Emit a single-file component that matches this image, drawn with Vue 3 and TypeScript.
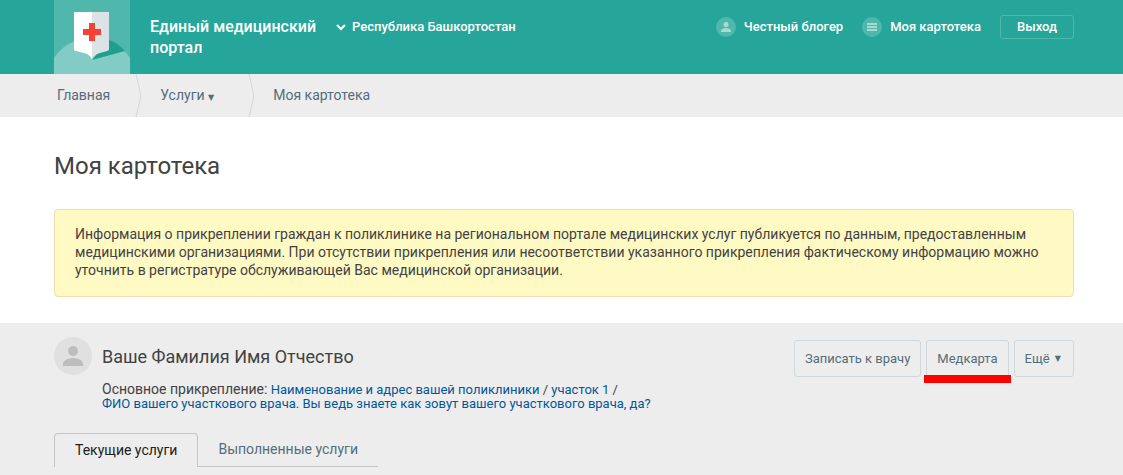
<script setup lang="ts">
import { ref } from 'vue'

const notice =
  'Информация о прикреплении граждан к поликлинике на региональном портале медицинских услуг публикуется по данным, предоставленным медицинскими организациями. При отсутствии прикрепления или несоответствии указанного прикрепления фактическому информацию можно уточнить в регистратуре обслуживающей Вас медицинской организации.'

const tabs: string[] = ['Текущие услуги', 'Выполненные услуги']
const activeTab = ref<number>(0)
</script>

<template>
  <div class="page">
    <header class="header">
      <a class="logo" href="#" aria-label="Единый медицинский портал">
        <svg width="76" height="74" viewBox="0 0 76 74">
          <rect width="76" height="74" fill="#50b7ad" />
          <path d="M0 58C8 45 22 38 38 38s30 7 38 20v16H0z" fill="#82ccc5" />
          <path d="M55 40c6 2 12 6 16 11L38 60z" fill="#1f9f90" />
          <path d="M20 12h18v48c-1-4-4-6-8-7l-8-2c-1 0-2-1-2-2z" fill="#fff" />
          <path d="M38 12h17v37c0 1-1 2-2 2l-7 2c-4 1-7 3-8 7z" fill="#dce3e7" />
          <path d="M35 23h6v6h6v6h-6v6h-6v-6h-6v-6h6z" fill="#f44336" />
        </svg>
      </a>
      <a class="brand" href="#">Единый медицинский<br />портал</a>
      <button class="region" type="button">
        <svg width="10" height="7" viewBox="0 0 10 7" aria-hidden="true">
          <path d="M1 1l4 4 4-4" fill="none" stroke="currentColor" stroke-width="2" />
        </svg>
        Республика Башкортостан
      </button>
      <nav class="user-nav">
        <a href="#">
          <svg width="20" height="20" viewBox="0 0 20 20" aria-hidden="true">
            <circle cx="10" cy="10" r="10" fill="#50b7ad" />
            <circle cx="10" cy="7.5" r="2.5" fill="#a6dad5" />
            <path d="M5 15v-1c0-2 3-3 5-3s5 1 5 3v1z" fill="#a6dad5" />
          </svg>
          Честный блогер
        </a>
        <a href="#">
          <svg width="20" height="20" viewBox="0 0 20 20" aria-hidden="true">
            <circle cx="10" cy="10" r="10" fill="#50b7ad" />
            <path d="M5 6h10v2H5zM5 9h10v2H5zM5 12h10v2H5z" fill="#a6dad5" />
          </svg>
          Моя картотека
        </a>
        <button class="logout" type="button">Выход</button>
      </nav>
    </header>

    <nav class="crumbs" aria-label="Навигация">
      <a href="#">Главная</a>
      <svg class="sep" width="8" height="43" viewBox="0 0 8 43" aria-hidden="true">
        <path d="M1 0l5 22-5 21" fill="none" stroke="#cfd8dc" />
      </svg>
      <a class="services" href="#">Услуги <span class="caret">▼</span></a>
      <svg class="sep" width="8" height="43" viewBox="0 0 8 43" aria-hidden="true">
        <path d="M1 0l5 22-5 21" fill="none" stroke="#cfd8dc" />
      </svg>
      <a href="#">Моя картотека</a>
    </nav>

    <main>
      <section class="intro">
        <h1>Моя картотека</h1>
        <p class="notice">{{ notice }}</p>
      </section>

      <section class="card">
        <div class="patient">
          <svg class="avatar" width="38" height="38" viewBox="0 0 38 38" aria-hidden="true">
            <circle cx="19" cy="19" r="19" fill="#e0e0e0" />
            <circle cx="19" cy="14" r="5" fill="#bdbdbd" />
            <path d="M9 29v-2c0-4 6-6 10-6s10 2 10 6v2z" fill="#bdbdbd" />
          </svg>
          <div class="details">
            <h2>Ваше Фамилия Имя Отчество</h2>
            <p>
              <span class="label">Основное прикрепление:</span> <a href="#">Наименование и адрес вашей поликлиники</a> / <a href="#">участок 1</a> /<br />
              <a href="#">ФИО вашего участкового врача. Вы ведь знаете как зовут вашего участкового врача, да?</a>
            </p>
          </div>
          <div class="actions">
            <button type="button">Записать к врачу</button>
            <button class="marked" type="button">Медкарта</button>
            <button class="more" type="button">Ещё <span class="caret">▼</span></button>
          </div>
        </div>
        <div class="tabs" role="tablist">
          <button
            v-for="(tab, i) in tabs"
            :key="tab"
            type="button"
            role="tab"
            :aria-selected="i === activeTab"
            :class="{ active: i === activeTab }"
            @click="activeTab = i"
          >{{ tab }}</button>
        </div>
      </section>
    </main>
  </div>
</template>

<style>
body {
  margin: 0;
  background: #ededed;
}
</style>

<style scoped>
.page {
  font: 14px/18px Roboto, "Liberation Sans", sans-serif;
  color: #424242;
}
.page * {
  box-sizing: border-box;
}
a {
  color: inherit;
  text-decoration: none;
}
button {
  font: inherit;
  color: inherit;
  background: none;
  border: 0;
  padding: 0;
  cursor: pointer;
}
.header,
.crumbs,
.intro,
.card {
  padding-left: 54px;
  padding-right: 49px;
}
.header {
  display: flex;
  align-items: flex-start;
  height: 74px;
  background: #26a69a;
  color: #fff;
  font-weight: 500;
}
.logo svg {
  display: block;
}
.brand {
  margin: 16px 0 0 20px;
  font-size: 16px;
  line-height: 21px;
}
.region {
  display: flex;
  align-items: center;
  gap: 6px;
  margin: 18px 0 0 20px;
  font-size: 13px;
}
.user-nav {
  display: flex;
  align-items: center;
  gap: 19px;
  margin: 15px 0 0 auto;
  font-size: 13px;
}
.user-nav a {
  display: flex;
  align-items: center;
  gap: 8px;
}
.logout {
  height: 24px;
  padding: 0 16px;
  border: 1px solid #50b7ad;
  border-radius: 3px;
}
.crumbs {
  display: flex;
  align-items: center;
  height: 43px;
  background: #ededed;
  color: #546e7a;
}
.crumbs a {
  padding: 0 0 2px 3px;
}
.sep {
  margin: 0 14px 0 25px;
}
.services {
  margin-right: 9px;
}
.caret {
  font: 8px/12px "DejaVu Sans", sans-serif;
}
.intro {
  padding-top: 33px;
  padding-bottom: 26px;
  background: #fff;
}
h1 {
  margin: 0;
  font-size: 24px;
  line-height: 32px;
  font-weight: 400;
}
.notice {
  margin: 27px 0 0;
  padding: 15px 20px 17px;
  border: 1px solid #f0deb4;
  border-radius: 4px;
  background: #fff9c4;
}
.card {
  padding-top: 14px;
  background: #ededed;
}
.patient {
  display: flex;
  align-items: flex-start;
}
.avatar {
  flex: none;
}
.details {
  margin-left: 10px;
}
h2 {
  margin: 8px 0 13px;
  font-size: 18px;
  line-height: 24px;
  font-weight: 400;
}
.details p {
  margin: 0;
  font-size: 13px;
  line-height: 14px;
}
.label {
  font-size: 14px;
}
.details a {
  color: #01579b;
}
.actions {
  display: flex;
  gap: 5px;
  margin: 3px 0 0 auto;
  color: #546e7a;
  font-size: 13px;
}
.actions button {
  height: 37px;
  padding: 0 10px;
  border: 1px solid #cfd8dc;
  border-radius: 3px;
  white-space: nowrap;
}
.actions .caret {
  margin-left: 2px;
  vertical-align: 2px;
}
.actions .more {
  padding-right: 12px;
}
.marked {
  position: relative;
}
.marked::after {
  content: "";
  position: absolute;
  left: -3px;
  right: -3px;
  bottom: -7px;
  height: 8px;
  background: #f00;
}
.tabs {
  display: flex;
  margin-top: 22px;
}
.tabs button {
  height: 34px;
  padding: 0 20px 1px;
  border-bottom: 1px solid #c4c4c4;
  color: #546e7a;
}
.tabs button.active {
  border: 1px solid #c4c4c4;
  border-bottom: 0;
  border-radius: 4px 4px 0 0;
  color: #212121;
}
</style>
